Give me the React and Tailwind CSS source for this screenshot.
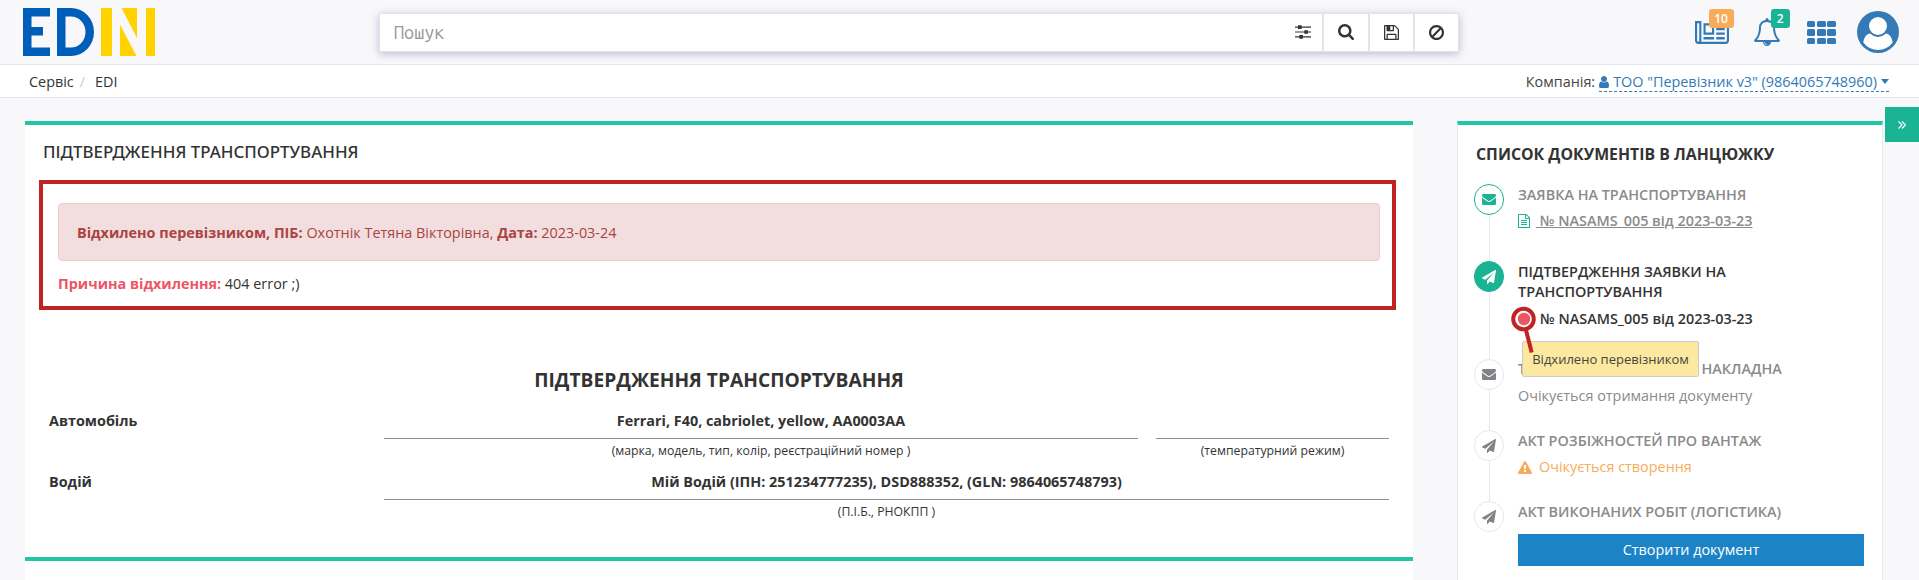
import React from "react";

const PATHS = {
  newspaper:
    "M1024 512h-384v384h384v-384zm128 640v128h-640v-128h640zm0-768v640h-640v-640h640zm640 768v128h-512v-128h512zm0-256v128h-512v-128h512zm0-256v128h-512v-128h512zm0-256v128h-512v-128h512zm-1536 960v-960h-128v960q0 26 19 45t45 19 45-19 19-45zm1664 0v-1088h-1536v1088q0 33-11 64h1483q26 0 45-19t19-45zm128-1216v1216q0 80-56 136t-136 56h-1664q-80 0-136-56t-56-136v-1088h256v-128h1792z",
  bell:
    "M912 1696q0-16-16-16-59 0-101.5-42.5t-42.5-101.5q0-16-16-16t-16 16q0 73 51.5 124.5t124.5 51.5q16 0 16-16zm-666-288h1300q-266-300-266-832 0-51-24-105t-69-103-121.5-80.5-169.5-31.5-169.5 31.5-121.5 80.5-69 103-24 105q0 532-266 832zm1482 0q0 52-38 90t-90 38h-448q0 106-75 181t-181 75-181-75-75-181h-448q-52 0-90-38t-38-90q50-42 91-88t85-119.5 74.5-158.5 50-206 19.5-260q0-152 117-282.5t307-158.5q-8-19-8-39 0-40 28-68t68-28 68 28 28 68q0 20-8 39 190 28 307 158.5t117 282.5q0 139 19.5 260t50 206 74.5 158.5 85 119.5 91 88z",
  search:
    "M1216 832q0-185-131.5-316.5t-316.5-131.5-316.5 131.5-131.5 316.5 131.5 316.5 316.5 131.5 316.5-131.5 131.5-316.5zm512 832q0 52-38 90t-90 38q-54 0-90-38l-343-342q-179 124-399 124-143 0-273.5-55.5t-225-150-150-225-55.5-273.5 55.5-273.5 150-225 225-150 273.5-55.5 273.5 55.5 225 150 150 225 55.5 273.5q0 220-124 399l343 343q37 37 37 90z",
  save:
    "M512 1536h768v-384h-768v384zm896 0h128v-896q0-14-10-38.5t-20-34.5l-281-281q-10-10-34-20t-39-10v416q0 40-28 68t-68 28h-576q-40 0-68-28t-28-68v-416h-128v1280h128v-416q0-40 28-68t68-28h832q40 0 68 28t28 68v416zm-384-928v-320q0-13-9.5-22.5t-22.5-9.5h-192q-13 0-22.5 9.5t-9.5 22.5v320q0 13 9.5 22.5t22.5 9.5h192q13 0 22.5-9.5t9.5-22.5zm640 32v928q0 40-28 68t-68 28h-1344q-40 0-68-28t-28-68v-1344q0-40 28-68t68-28h928q40 0 88 20t76 48l280 280q28 28 48 76t20 88z",
  ban:
    "M1440 893q0-161-87-295l-754 753q137 89 297 89 111 0 211.5-43.5t173.5-116.5 116-174.5 43-212.5zm-999 299l755-754q-135-91-300-91-148 0-273 73t-198 199-73 274q0 162 89 299zm1223-299q0 157-61 300t-163.5 246-245 164-298.5 61-298.5-61-245-164-163.5-246-61-300 61-299.5 163.5-245.5 245-164 298.5-61 298.5 61 245 164 163.5 245.5 61 299.5z",
  envelope:
    "M1792 710v794q0 66-47 113t-113 47h-1472q-66 0-113-47t-47-113v-794q44 49 101 87 362 246 497 345 57 42 92.5 65.5t94.5 48 110 24.5h2q51 0 110-24.5t94.5-48 92.5-65.5q170-123 498-345 57-39 100-87zm0-294q0 79-49 151t-122 123q-376 261-468 325-10 7-42.5 31t-54 38.5-52 32.5-57.5 27-50 9h-2q-23 0-50-9t-57.5-27-52-32.5-54-38.5-42.5-31q-91-64-262-182.5t-205-142.5q-62-42-117-115.5t-55-136.5q0-78 41.5-130t118.5-52h1472q65 0 112.5 47t47.5 113z",
  plane:
    "M1764 11q33 24 27 64l-256 1536q-5 29-32 45-14 8-31 8-11 0-24-5l-453-185-242 295q-18 23-49 23-13 0-22-4-19-7-30.5-23.5t-11.5-36.5v-349l864-1059-1069 925-395-162q-37-14-40-55-2-40 32-59l1664-960q15-9 32-9 20 0 36 11z",
  warning:
    "M1024 1375v-190q0-14-9.5-23.5t-22.5-9.5h-192q-13 0-22.5 9.5t-9.5 23.5v190q0 14 9.5 23.5t22.5 9.5h192q13 0 22.5-9.5t9.5-23.5zm-2-374l18-459q0-12-10-19-13-11-24-11h-220q-11 0-24 11-10 7-10 21l17 457q0 10 10 16.5t24 6.5h185q14 0 23.5-6.5t10.5-16.5zm-14-934l768 1408q35 63-2 126-17 29-46.5 46t-63.5 17h-1536q-34 0-63.5-17t-46.5-46q-37-63-2-126l768-1408q17-31 47-49t65-18 65 18 47 49z",
  file:
    "M1596 380q28 28 48 76t20 88v1152q0 40-28 68t-68 28h-1344q-40 0-68-28t-28-68v-1600q0-40 28-68t68-28h896q40 0 88 20t76 48zm-444-244v376h376q-10-29-22-41l-313-313q-12-12-41-22zm384 1528v-1024h-416q-40 0-68-28t-28-68v-416h-768v1536h1280zm-1024-864q0-14 9-23t23-9h704q14 0 23 9t9 23v64q0 14-9 23t-23 9h-704q-14 0-23-9t-9-23v-64zm736 224q14 0 23 9t9 23v64q0 14-9 23t-23 9h-704q-14 0-23-9t-9-23v-64q0-14 9-23t23-9h704zm0 256q14 0 23 9t9 23v64q0 14-9 23t-23 9h-704q-14 0-23-9t-9-23v-64q0-14 9-23t23-9h704z",
  user:
    "M1536 1399q0 109-62.5 187t-150.5 78h-854q-88 0-150.5-78t-62.5-187q0-85 8.5-160.5t31.5-152 58.5-131 94-89 134.5-34.5q131 128 313 128t313-128q76 0 134.5 34.5t94 89 58.5 131 31.5 152 8.5 160.5zm-256-887q0 159-112.5 271.5t-271.5 112.5-271.5-112.5-112.5-271.5 112.5-271.5 271.5-112.5 271.5 112.5 112.5 271.5z",
};

function Icon({ name, box = "0 0 1792 1792", className }) {
  return (
    <svg viewBox={box} preserveAspectRatio="none" fill="currentColor" className={`shrink-0 ${className}`}>
      <path d={PATHS[name]} />
    </svg>
  );
}

function Logo() {
  return (
    <svg viewBox="0 0 132 48" className="h-12 w-[132px] shrink-0">
      <path fill="#005ebb" d="M0 0h27v8.500H8.500V19H20v8.500H8.500v12H27V48H0z" />
      <path fill="#005ebb" fillRule="evenodd" d="M34 0h14a23 24 0 0 1 0 48H34zM42.500 8.500v31H48a14.500 15.500 0 0 0 0-31z" />
      <path fill="#ffd200" d="M78 0h11v48H78zM123 0h9v48h-9zM98.500 0H114v30zM97 16.500 113.500 48H97z" />
    </svg>
  );
}

function SearchBar() {
  return (
    <div className="ml-[224px] flex h-[39px] w-[1080px] rounded-[1px] border border-[#e2e3ea] bg-white text-[#333] shadow-[0_2px_8px_rgba(70,80,120,0.35)]">
      <div className="flex flex-1 items-center justify-between pl-[14px] pr-[11px]">
        <span className="text-[18px] text-[#999] [font-family:'Ubuntu_Mono','Roboto_Mono','DejaVu_Sans_Mono',monospace]">
          Пошук
        </span>
        <svg viewBox="0 0 16 14" className="h-[14px] w-4" fill="currentColor">
          <path d="M0 1.500h16v1.200H0zM0 6.400h16v1.200H0zM0 11.300h16v1.200H0z" />
          <path d="M3 .3h3.600v3.600H3zM9.300 5.200h3.600v3.600H9.300zM4.300 10.100h3.600v3.600H4.300z" />
        </svg>
      </div>
      <div className="flex w-[46px] items-center justify-center border-l-2 border-[#e3e4e6]">
        <Icon name="search" box="64 128 1664 1664" className="h-4 w-4" />
      </div>
      <div className="flex w-[45px] items-center justify-center border-l-2 border-[#e3e4e6]">
        <Icon name="save" box="128 128 1536 1536" className="h-[15px] w-[15px]" />
      </div>
      <div className="flex w-[45px] items-center justify-center border-l-2 border-[#e3e4e6]">
        <Icon name="ban" box="128 125 1536 1539" className="h-[15px] w-[15px]" />
      </div>
    </div>
  );
}

function HeaderActions() {
  return (
    <div className="ml-auto flex items-center text-[#337ab7]">
      <div className="relative mr-[25px] mt-[1px]">
        <Icon name="newspaper" box="0 256 2048 1280" className="block h-[23px] w-[34px]" />
        <span className="absolute -top-3 left-[14px] flex h-[19px] w-[25px] items-center justify-center rounded-[3px] bg-[#f8ac59] text-xs font-semibold text-white">
          10
        </span>
      </div>
      <div className="relative mr-[27px]">
        <Icon name="bell" box="64 0 1664 1792" className="block h-7 w-[26px]" />
        <span className="absolute -top-[9px] left-[17px] flex h-[19px] w-[19px] items-center justify-center rounded-[3px] bg-[#1ab394] text-xs font-semibold text-white">
          2
        </span>
      </div>
      <div className="mr-[21px] mt-[1px] grid grid-cols-3 gap-x-[1.500px] gap-y-[2px]">
        {[0, 1, 2, 3, 4, 5, 6, 7, 8].map((n) => (
          <span key={n} className="h-[6.500px] w-[8.800px] rounded-[1.500px] bg-[#337ab7]" />
        ))}
      </div>
      <svg viewBox="0 0 42 42" className="h-[42px] w-[42px]">
        <circle cx="21" cy="21" r="21" fill="#337ab7" />
        <path fill="#fff" d="M6.300 31.500C6.900 26.500 9.500 22.800 13 22.400Q21 29.400 29 22.400C32.500 22.800 35.100 26.500 35.700 31.500A18 18 0 0 1 6.300 31.500z" />
        <circle cx="21" cy="15" r="10.300" fill="#337ab7" />
        <circle cx="21" cy="15" r="9" fill="#fff" />
      </svg>
    </div>
  );
}

function Step({ icon, tone = "idle", last, height, children }) {
  const tones = {
    idle: "border-[#e7e7e7] bg-white text-[#808488]",
    done: "border-[#1ab394] bg-white text-[#1ab394]",
    active: "border-[#1ab394] bg-[#1ab394] text-white",
  };
  return (
    <div className={`flex ${height}`}>
      <div className="flex w-[30px] shrink-0 flex-col items-center">
        <div className={`flex h-[31px] w-[30px] shrink-0 items-center justify-center rounded-full border ${tones[tone]}`}>
          {icon === "envelope" ? (
            <Icon name="envelope" box="0 256 1792 1408" className="h-[11px] w-[14px]" />
          ) : (
            <Icon name="plane" className="h-[14px] w-[14px]" />
          )}
        </div>
        {!last && <div className="w-px flex-1 bg-[#e7eaec]" />}
      </div>
      <div className="ml-[14px] flex-1">{children}</div>
    </div>
  );
}

function Field({ label, children }) {
  return (
    <div className="flex h-[61px]">
      <div className="w-[335px] shrink-0 font-bold">{label}</div>
      {children}
    </div>
  );
}

function FieldValue({ value, caption, className }) {
  return (
    <div className={`text-center ${className}`}>
      <div className="h-7 border-b border-[#8f8f8f] font-bold">{value}</div>
      <div className="mt-[2px] text-[12.24px]">{caption}</div>
    </div>
  );
}

export default function App() {
  return (
    <div className="flex h-[580px] w-[1919px] flex-col overflow-hidden bg-[#f8f8fb] text-[14.4px] leading-5 text-[#333] [font-family:'Open_Sans',sans-serif]">
      <header className="flex h-[65px] shrink-0 items-center border-b border-[#e3e6ea] pl-[23px] pr-5">
        <Logo />
        <SearchBar />
        <HeaderActions />
      </header>

      <nav className="flex h-[33px] shrink-0 items-center justify-between border-b border-[#e3e6ea] bg-white pl-[29px] pr-[30px] pt-[2px]">
        <div className="flex">
          <span>Сервіс</span>
          <span className="ml-[6px] mr-[10px] text-[#ccc]">/</span>
          <span>EDI</span>
        </div>
        <div className="flex items-start">
          <span className="mr-1 text-[#444]">Компанія:</span>
          <a className="flex h-5 items-center border-b border-dashed border-[#337ab7] text-[#337ab7]">
            <Icon name="user" box="256 128 1280 1536" className="mr-1 h-3 w-[10px]" />
            ТОО "Перевізник v3" (9864065748960)
            <span className="ml-1 border-x-4 border-t-[5px] border-x-transparent border-t-[#337ab7]" />
          </a>
        </div>
      </nav>

      <main className="flex flex-1 items-start pl-[25px]">
        <div className="mt-[23px] w-[1388px] shrink-0">
          <section className="h-[436px] border-t-4 border-[#23c6a4] bg-white">
            <h5 className="ml-[18px] pt-[17px] text-[16.9px] font-medium leading-5 [font-family:'Noto_Sans','Open_Sans',sans-serif]">
              ПІДТВЕРДЖЕННЯ ТРАНСПОРТУВАННЯ
            </h5>
            <div className="ml-[14px] mt-[18px] h-[130px] w-[1357px] border-4 border-[#bf2424] pl-[15px] pr-3 pt-[19px]">
              <div className="flex h-[58px] items-center rounded border border-[#ebccd1] bg-[#f2dede] pl-[18px] pt-[2px] text-[#a94442]">
                <p>
                  <b>Відхилено перевізником, ПІБ:</b> Охотнік Тетяна Вікторівна, <b>Дата:</b> 2023-03-24
                </p>
              </div>
              <p className="mt-[13px]">
                <b className="text-[#ed5565]">Причина відхилення:</b> 404 error ;)
              </p>
            </div>
            <h2 className="mt-[58px] text-center text-[19.2px] font-bold leading-6">ПІДТВЕРДЖЕННЯ ТРАНСПОРТУВАННЯ</h2>
            <div className="mt-[19px] pl-6">
              <Field label="Автомобіль">
                <FieldValue
                  className="w-[754px]"
                  value="Ferrari, F40, cabriolet, yellow, AA0003AA"
                  caption="(марка, модель, тип, колір, реєстраційний номер )"
                />
                <FieldValue className="ml-[18px] w-[233px]" value="" caption="(температурний режим)" />
              </Field>
              <Field label="Водій">
                <FieldValue
                  className="w-[1005px]"
                  value="Мій Водій (ІПН: 251234777235), DSD888352, (GLN: 9864065748793)"
                  caption="(П.І.Б., РНОКПП )"
                />
              </Field>
            </div>
          </section>
          <section className="h-10 border-t-4 border-[#23c6a4] bg-white" />
        </div>

        <aside className="ml-11 mt-[23px] h-[470px] w-[426px] shrink-0 border-x border-t-4 border-x-[#e7eaec] border-t-[#23c6a4] bg-white pl-4 pr-[18px]">
          <h3 className="ml-[2px] pt-[19px] text-[15.84px] font-bold leading-5">СПИСОК ДОКУМЕНТІВ В ЛАНЦЮЖКУ</h3>
          <div className="mt-5 font-semibold text-[#8a8a8a]">
            <Step icon="envelope" tone="done" height="h-[77px]">
              <p className="pt-[1px]">ЗАЯВКА НА ТРАНСПОРТУВАННЯ</p>
              <p className="mt-[6px] flex items-center">
                <Icon name="file" box="128 0 1536 1792" className="mr-[6px] h-[14px] w-3 text-[#1ab394]" />
                <a className="whitespace-pre underline"> № NASAMS_005 від 2023-03-23</a>
              </p>
            </Step>
            <Step icon="plane" tone="active" height="h-[98px]">
              <div className="relative text-[#333]">
                <p className="pt-[1px]">
                  ПІДТВЕРДЖЕННЯ ЗАЯВКИ НА
                  <br />
                  ТРАНСПОРТУВАННЯ
                </p>
                <p className="mt-[7px] pl-[22px]">№ NASAMS_005 від 2023-03-23</p>
                <div className="absolute left-[4px] top-20 z-10 flex h-9 w-[177px] items-center justify-center rounded-[2px] border border-[#ccc] bg-[#fce9a0] text-[13px] font-normal text-[#444]">
                  Відхилено перевізником
                </div>
                <svg viewBox="0 0 28 48" className="absolute -left-[8px] top-[45px] z-20 h-12 w-7">
                  <path d="M16 24 21.700 46.500" stroke="#bf2424" strokeWidth="4" />
                  <circle cx="13.500" cy="13" r="10.300" fill="#fff" stroke="#bf2424" strokeWidth="4" />
                  <circle cx="14" cy="13" r="6.200" fill="#ed5565" />
                </svg>
              </div>
            </Step>
            <Step icon="envelope" height="h-[71px]">
              <p>ТОВАРНО-ТРАНСПОРТНА НАКЛАДНА</p>
              <p className="mt-[7px] font-normal">Очікується отримання документу</p>
            </Step>
            <Step icon="plane" height="h-[71px]">
              <p className="pt-[1px]">АКТ РОЗБІЖНОСТЕЙ ПРО ВАНТАЖ</p>
              <p className="mt-[6px] flex items-center font-normal text-[#f8ac59]">
                <Icon name="warning" box="0 0 1792 1664" className="mr-[7px] h-[13px] w-[14px]" />
                Очікується створення
              </p>
            </Step>
            <Step icon="plane" last height="h-[66px]">
              <p className="pt-[1px]">АКТ ВИКОНАНИХ РОБІТ (ЛОГІСТИКА)</p>
              <button className="mt-3 block h-8 w-full bg-[#1c84c6] text-center font-normal text-white">
                Створити документ
              </button>
            </Step>
          </div>
        </aside>

        <button className="ml-auto mt-[9px] flex h-[35px] w-[34px] items-center justify-center bg-[#1ab394] text-white">
          <svg viewBox="0 0 8 8" className="h-2 w-2" fill="none" stroke="currentColor" strokeWidth="1.200">
            <path d="M.5.500 4 4 .5 7.500M4 .5 7.500 4 4 7.500" />
          </svg>
        </button>
      </main>
    </div>
  );
}
